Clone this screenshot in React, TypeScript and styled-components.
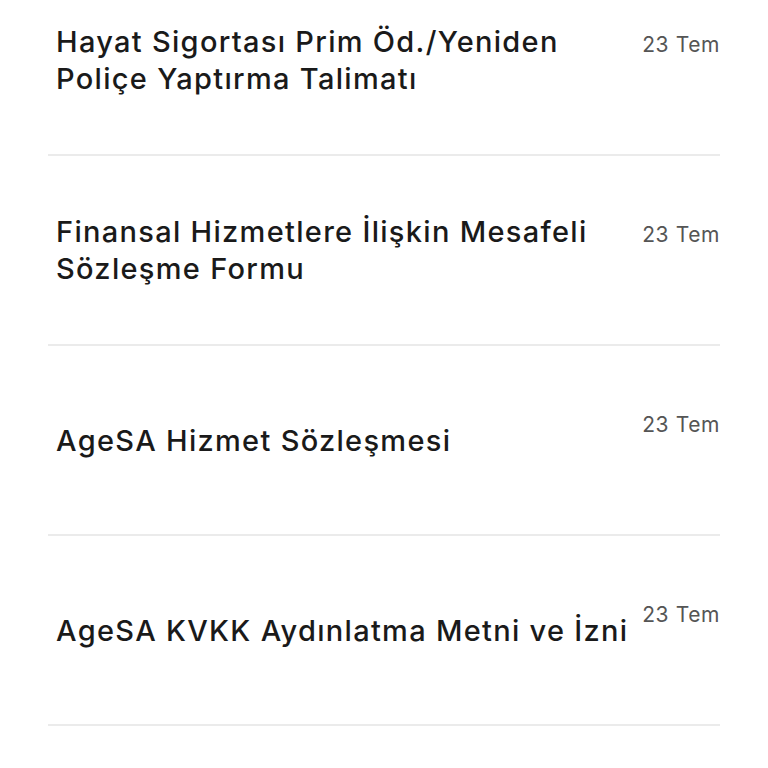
import styled, { createGlobalStyle } from 'styled-components';

type DocItem = {
  title: string;
  date: string;
};

const docs: DocItem[] = [
  { title: 'Hayat Sigortası Prim Öd./Yeniden Poliçe Yaptırma Talimatı', date: '23 Tem' },
  { title: 'Finansal Hizmetlere İlişkin Mesafeli Sözleşme Formu', date: '23 Tem' },
  { title: 'AgeSA Hizmet Sözleşmesi', date: '23 Tem' },
  { title: 'AgeSA KVKK Aydınlatma Metni ve İzni', date: '23 Tem' },
];

const GlobalStyle = createGlobalStyle`
  html, body {
    margin: 0;
    padding: 0;
    background: #ffffff;
    overflow: hidden;
  }
  body {
    font-family: Inter, "Noto Sans", sans-serif;
    -webkit-font-smoothing: antialiased;
  }
`;

const Page = styled.div`
  width: 768px;
  height: 768px;
  overflow: hidden;
  background: #ffffff;
`;

// list is scrolled a little, first row is cut at the top
const List = styled.ul`
  list-style: none;
  margin: -34px 0 0;
  padding: 0 48px;
`;

const Row = styled.li`
  display: flex;
  align-items: center;
  gap: 6px;
  min-height: 188px;
  padding-left: 8px;
  border-bottom: 2px solid #ebebeb;
`;

const Title = styled.div`
  flex: 1;
  font-family: Inter, "Noto Sans", sans-serif;
  font-weight: 500;
  font-size: 29px;
  line-height: 37px;
  color: #1a1a1a;
  letter-spacing: 1.3px;
`;

const DateLabel = styled.div`
  align-self: flex-start;
  margin-top: 67px;
  font-family: Inter, "Noto Sans", sans-serif;
  font-size: 21px;
  line-height: 24px;
  color: #555555;
  letter-spacing: 0.6px;
  white-space: nowrap;
`;

export default function App() {
  return (
    <Page>
      <GlobalStyle />
      <List>
        {docs.map((doc) => (
          <Row key={doc.title}>
            <Title>{doc.title}</Title>
            <DateLabel>{doc.date}</DateLabel>
          </Row>
        ))}
      </List>
    </Page>
  );
}
